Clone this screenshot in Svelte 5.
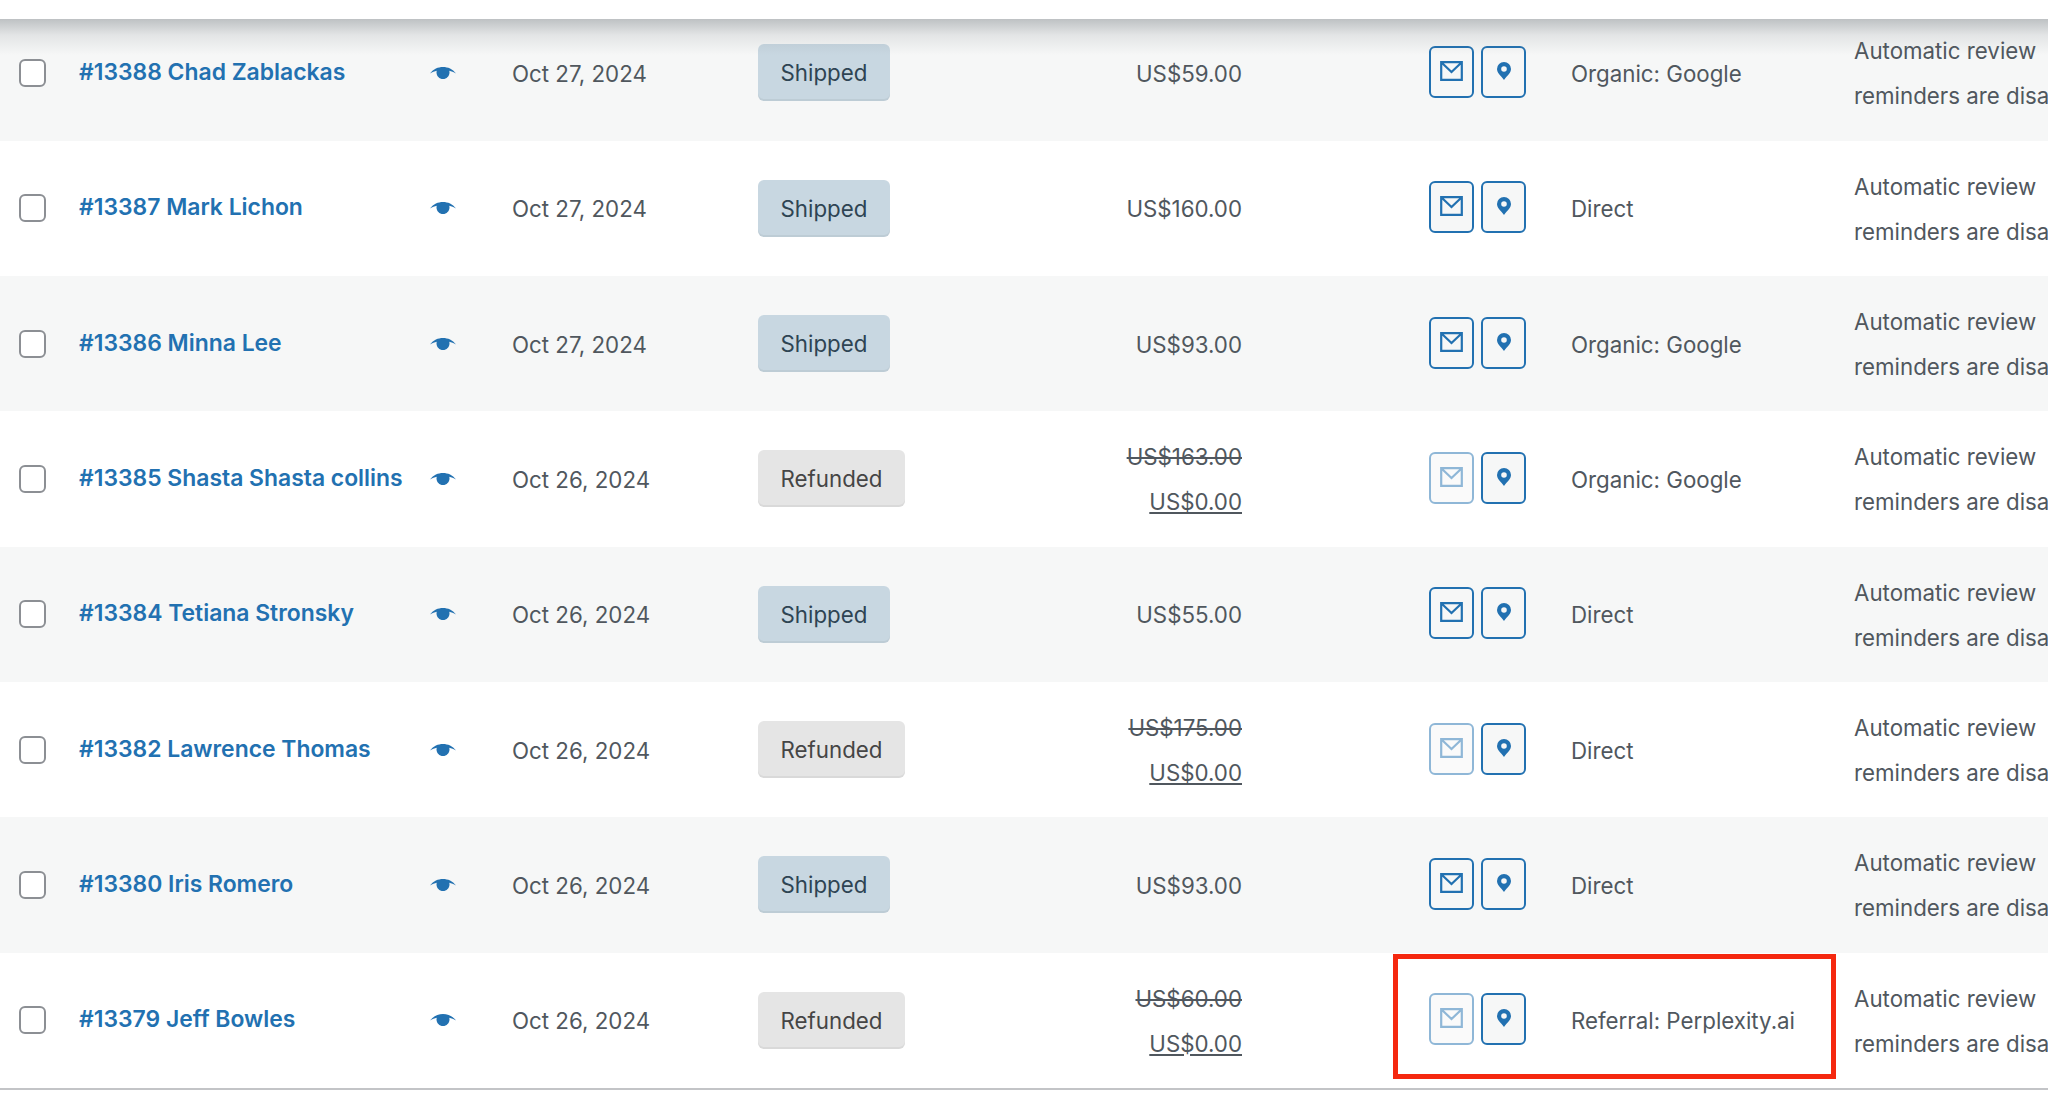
<script lang="ts">
	// Orders list, scrolled so the first row sits under the sticky header
	const orders = [
		{ id: 13388, name: 'Chad Zablackas', date: 'Oct 27, 2024', status: 'Shipped', total: 'US$59.00', source: 'Organic: Google' },
		{ id: 13387, name: 'Mark Lichon', date: 'Oct 27, 2024', status: 'Shipped', total: 'US$160.00', source: 'Direct' },
		{ id: 13386, name: 'Minna Lee', date: 'Oct 27, 2024', status: 'Shipped', total: 'US$93.00', source: 'Organic: Google' },
		{ id: 13385, name: 'Shasta Shasta collins', date: 'Oct 26, 2024', status: 'Refunded', total: 'US$163.00', source: 'Organic: Google' },
		{ id: 13384, name: 'Tetiana Stronsky', date: 'Oct 26, 2024', status: 'Shipped', total: 'US$55.00', source: 'Direct' },
		{ id: 13382, name: 'Lawrence Thomas', date: 'Oct 26, 2024', status: 'Refunded', total: 'US$175.00', source: 'Direct' },
		{ id: 13380, name: 'Iris Romero', date: 'Oct 26, 2024', status: 'Shipped', total: 'US$93.00', source: 'Direct' },
		{ id: 13379, name: 'Jeff Bowles', date: 'Oct 26, 2024', status: 'Refunded', total: 'US$60.00', source: 'Referral: Perplexity.ai' }
	];
</script>

<div class="page">
	<div class="sticky-head"></div>
	<div class="orders">
		{#each orders as order}
			<div class="row">
				<div><input class="check" type="checkbox" aria-label="Select order {order.id}" /></div>
				<a class="name" href="#{order.id}">#{order.id} {order.name}</a>
				<div>
					<svg class="eye" viewBox="0 0 26 12" aria-hidden="true">
						<path d="M0 6.500C3.500 2 8 0 13 0s9.500 2 13 6.500c-2.500-1.300-4.500-2.200-6.800-2.700.2.500.3 1 .3 1.600C19.500 8.900 16.600 12 13 12S6.500 8.900 6.500 5.400c0-.6.100-1.100.3-1.600C4.500 4.300 2.500 5.200 0 6.500z" />
					</svg>
				</div>
				<div class="date">{order.date}</div>
				<div>
					<mark class="status" class:refunded={order.status === 'Refunded'}>{order.status}</mark>
				</div>
				<div class="total">
					{#if order.status === 'Refunded'}
						<del>{order.total}</del>
						<ins>US$0.00</ins>
					{:else}
						{order.total}
					{/if}
				</div>
				<div class="actions">
					<button class="action" class:faded={order.status === 'Refunded'} aria-label="Email">
						<svg class="mail" viewBox="0 0 23 20" aria-hidden="true">
							<path d="M1.200 1.200h20.600v17.600H1.200zM1.500 1.500 11.500 11l10-9.500" />
						</svg>
					</button>
					<button class="action" aria-label="Location">
						<svg class="pin" viewBox="0 0 14 18" aria-hidden="true">
							<path fill-rule="evenodd" d="M7 0a7 7 0 0 1 7 7c0 3.800-3.500 6.300-7 11C3.500 13.300 0 10.800 0 7a7 7 0 0 1 7-7zm0 4.200a2.800 2.800 0 1 0 0 5.600 2.800 2.800 0 0 0 0-5.600z" />
						</svg>
					</button>
				</div>
				<div class="source">{order.source}</div>
				<div class="review">Automatic review reminders are disabled</div>
			</div>
		{/each}
	</div>
	<div class="highlight"></div>
</div>

<style>
	:global(body) {
		background: #fff;
	}

	.page {
		position: relative;
		width: 2048px;
		height: 1113px;
		overflow: hidden;
		font-family: Inter, 'Liberation Sans', sans-serif;
		font-size: 22.3px;
		color: #50575e;
	}

	/* Sticky table header: white strip with a shadow falling on the rows */
	.sticky-head {
		position: absolute;
		top: 0;
		left: 0;
		right: 0;
		height: 19px;
		background: #fff;
	}

	.sticky-head::after {
		content: '';
		position: absolute;
		top: 19px;
		left: 0;
		right: 0;
		height: 36px;
		background: linear-gradient(rgba(90, 98, 104, 0.36), rgba(90, 98, 104, 0.12) 45%, rgba(90, 98, 104, 0));
	}

	.orders {
		padding-top: 5.33px;
		border-bottom: 2px solid #c3c4c7;
		width: 2048px;
	}

	.row {
		display: grid;
		grid-template-columns: 79px 351px 82px 246px 242px 242px 329px 283px 270px;
		align-items: center;
		height: 135.33px;
	}

	.row:nth-child(odd) {
		background: #f6f7f7;
	}

	.check {
		appearance: none;
		display: block;
		width: 27px;
		height: 28px;
		margin: 0 0 0 19px;
		background: #fff;
		border: 2px solid #8c8f94;
		border-radius: 6px;
	}

	.name {
		color: #2271b1;
		font-size: 22.9px;
		font-weight: 600;
		text-decoration: none;
		white-space: nowrap;
		margin-bottom: 2px;
	}

	.eye {
		display: block;
		width: 26px;
		height: 12px;
		fill: #2271b1;
	}

	.date,
	.source {
		padding-top: 1px;
	}

	.status {
		display: inline-block;
		padding: 0 22.500px;
		line-height: 57px;
		border-radius: 6px;
		background: #c8d7e1;
		color: #2e4453;
		box-shadow: inset 0 -2px 0 rgba(0, 0, 0, 0.05);
	}

	.status.refunded {
		background: #e5e5e5;
		color: #454545;
	}

	.total {
		display: flex;
		flex-direction: column;
		align-items: flex-end;
		line-height: 45px;
		padding-top: 1px;
	}

	.total ins {
		text-decoration: underline;
	}

	.actions {
		display: flex;
		gap: 7px;
		margin-left: 187px;
		margin-bottom: 2px;
	}

	.action {
		display: flex;
		align-items: center;
		justify-content: center;
		width: 45px;
		height: 52px;
		padding: 0;
		background: #f6f7f7;
		border: 2px solid #2271b1;
		border-radius: 6px;
	}

	.action.faded {
		opacity: 0.5;
	}

	.mail {
		width: 23px;
		height: 20px;
		margin-bottom: 2px;
		fill: none;
		stroke: #2271b1;
		stroke-width: 2.2;
	}

	.pin {
		width: 14px;
		height: 18px;
		margin-bottom: 2px;
		fill: #2271b1;
	}

	.review {
		line-height: 45px;
		padding-top: 1px;
	}

	/* Red annotation drawn over the screenshot */
	.highlight {
		position: absolute;
		left: 1393px;
		top: 954px;
		width: 443px;
		height: 125px;
		box-sizing: border-box;
		border: 5px solid #f5280f;
	}
</style>
